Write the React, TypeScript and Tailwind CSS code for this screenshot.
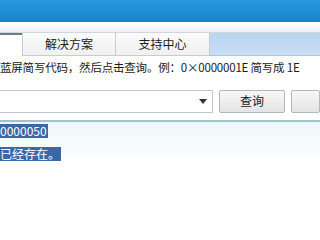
export default function App() {
  const font = { fontFamily: '"Noto Sans CJK SC", "Liberation Sans", sans-serif' };
  return (
    <div className="w-[320px] h-[240px] overflow-hidden bg-white text-[12px] text-[#1a1a1a]" style={font}>
      <div className="h-[22px] bg-gradient-to-b from-[#2a98dc] to-[#1684cc]" />
      <div className="h-[11px] bg-gradient-to-b from-white to-[#eef2f5] border-b border-[#cfd6dc]" />
      <div className="flex h-[23px]">
        <div className="w-[22px] bg-white border-t-2 border-[#6f7c84]" />
        <div className="w-[94px] flex items-center justify-center border border-t-0 border-[#c7ccd1] bg-gradient-to-b from-[#fbfbfb] to-[#f0f0f0]">
          解决方案
        </div>
        <div className="w-[94px] flex items-center justify-center border-b border-r border-[#c7ccd1] bg-gradient-to-b from-[#fbfbfb] to-[#f0f0f0]">
          支持中心
        </div>
        <div className="flex-1 bg-gradient-to-b from-[#b9d5f1] to-[#c8def4] border-b border-[#b0c6da]" />
      </div>
      <div className="h-[33px] pt-[3px] leading-[16px] whitespace-nowrap text-[11.5px] tracking-[-0.2px]">
        蓝屏简写代码，然后点击查询。例：0×0000001E 简写成 1E
      </div>
      <div className="flex items-center gap-[6px] h-[24px] -ml-[4px]">
        <div className="w-[226px] h-[23px] border border-[#c3c8cd] bg-white flex items-center justify-end pr-[5px]">
          <svg width="8" height="5" viewBox="0 0 8 5"><path d="M0 0h8L4 5z" fill="#333" /></svg>
        </div>
        <div className="w-[69px] h-[23px] border border-[#b3b8bd] rounded-[2px] bg-gradient-to-b from-[#f7f7f7] to-[#e4e4e4] flex items-center justify-center">
          查询
        </div>
        <div className="w-[30px] h-[23px] border border-[#b3b8bd] rounded-[2px] bg-gradient-to-b from-[#f7f7f7] to-[#e4e4e4]" />
      </div>
      <div className="mt-[7px] h-[2px] bg-[#9ec4c8]" />
      <div className="h-[44px] bg-gradient-to-b from-[#eef7fb] to-white leading-[14px]">
        <div className="pt-[2px] h-[16px]">
          <span className="bg-[#3c67a6] text-white pr-[1px] leading-[14px] inline-block align-top">0000050</span>
        </div>
        <div className="pt-[9px]">
          <span className="bg-[#3c67a6] text-white pr-[1px] leading-[14px] inline-block align-top">已经存在。</span>
        </div>
      </div>
    </div>
  );
}
